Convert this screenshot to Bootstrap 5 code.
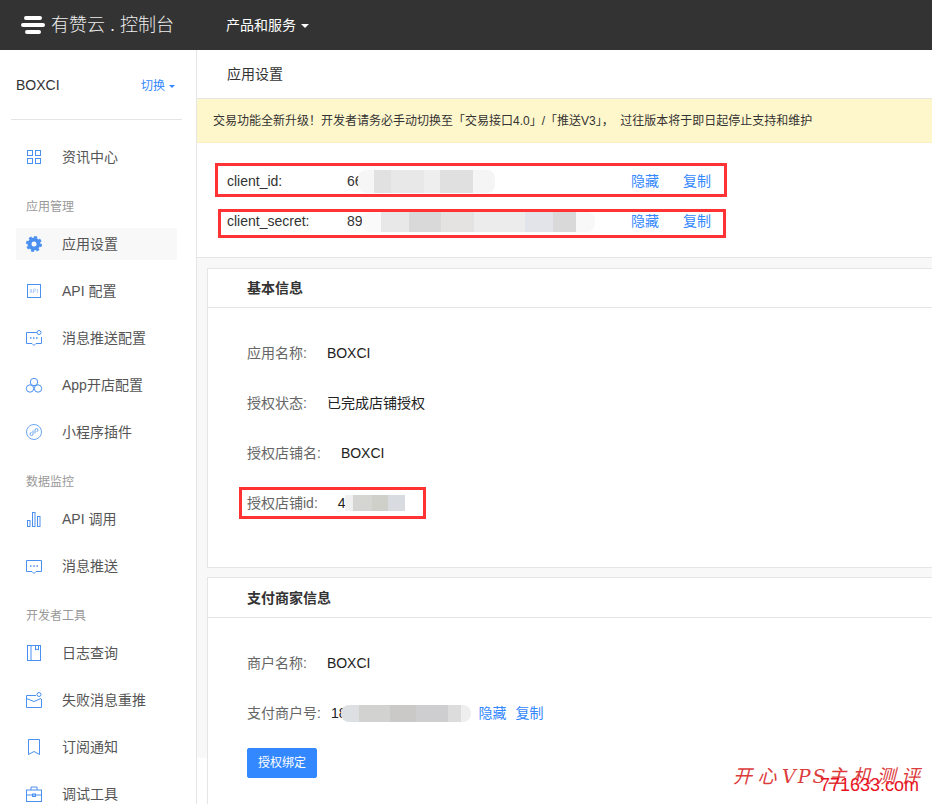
<!DOCTYPE html>
<html lang="zh-CN">
<head>
<meta charset="utf-8">
<title>应用设置</title>
<link href="https://cdn.jsdelivr.net/npm/bootstrap@5.3.0/dist/css/bootstrap.min.css" rel="stylesheet">
<style>
html,body{height:804px;overflow:hidden}
body{position:relative;font-family:"Liberation Sans","Noto Sans CJK SC",sans-serif;font-size:14px;color:#333;background:#fff}
a{text-decoration:none}
.top-bar{height:50px;background:#333;padding:0}
.brand-box{width:197px;padding-left:21px;gap:6px;margin:0;color:#eee;font-size:18px;font-weight:300}
.brand-box svg{flex:none}
.svc-link{color:#fff;padding:0;margin-left:29px;font-size:14px}
.dropdown-toggle::after{margin-left:5px;vertical-align:2px;border-top-width:4px;border-right-width:4px;border-left-width:4px}
.shell{height:754px}
.side-pane{width:197px;flex:none;border-right:1px solid #e5e5e5;padding:0 19px 0 16px;overflow:hidden}
.acct-row{height:69px;padding-top:2px}
.acct-rule{border-bottom:1px solid #e5e5e5;margin:0 -5px 21px;height:1px}
.swap-link{color:#38f;font-size:12px;margin-right:2px}
.swap-link.dropdown-toggle::after{margin-left:4px;vertical-align:2px;border-top-width:3px;border-right-width:3px;border-left-width:3px}
.menu-item{height:32px;margin-bottom:15px;color:#555;padding-left:9px;gap:19px;border-radius:2px}
.menu-item svg{flex:none}
.menu-item.is-on{background:#f8f8f8}
.menu-group{height:18px;line-height:18px;margin:25px 0 12px 10px;font-size:12px;color:#999}
.main-pane{flex:1;min-width:0;overflow:hidden}
.page-title{height:49px;padding-left:30px;border-bottom:1px solid #e5e5e5;color:#333}
.notice-bar{height:44px;margin:0;padding:0 0 0 16px;border:0;border-bottom:1px solid #fbeec2;border-radius:0;background:#fff7cc;color:#333;font-size:12px;white-space:pre}
.keys-pane{height:115px;padding:20px 0 0 18px;border-bottom:1px solid #e5e5e5}
.red-frame{border:3px solid #f33}
.key-one{width:512px;height:34px;margin-bottom:12px;padding:2px 13px 0 9px}
.key-two{width:508px;height:29px;margin-left:3px;padding:0 12px 4px 6px}
.key-name{width:120px;flex:none}
.blue-link{color:#38f}
.gap-links{gap:24px}
.smear{display:inline-block;position:relative;border-radius:8px}
.smear-a{width:137px;height:23px;margin-left:-5px;background:linear-gradient(90deg,#f6f6f6 0 12%,#e2e1e1 12% 24%,#e8e8e8 24% 48%,#eee 48% 60%,#e0e0e0 60% 84%,#f5f5f5 84%)}
.smear-b{width:233px;height:20px;margin-left:-1px;background:linear-gradient(90deg,#fafafa 0 8%,#e8e8e8 8% 20%,#d9d9d9 20% 34%,#e5e2e2 34% 48%,#ececec 48% 70%,#e2e4e9 70% 82%,#d9d9d9 82% 92%,#f8f8f8 92%)}
.smear-c{width:60px;height:16px;margin-left:-1px;border-radius:0;background:linear-gradient(90deg,#f0f0f0 0 14%,#d5d5d2 14% 45%,#d0d0ca 45% 72%,#d8dce0 72%)}
.smear-d{width:130px;height:17px;margin-left:-5px;background:linear-gradient(90deg,#dde0e2 0 14%,#d2d2d0 14% 38%,#cbc9c8 38% 58%,#ceced0 58% 82%,#dcdcdc 82% 92%,#eee 92%)}
.grey-pane{background:#f8f8f8;padding:10px 0 0 10px;height:500px}
.info-card{border:1px solid #e5e5e5;border-radius:0;margin-right:-4px;margin-bottom:9px}
.info-head{height:39px;background:#fff;border-bottom:1px solid #e5e5e5;border-radius:0!important;padding:0 0 0 39px;font-weight:700;color:#333;line-height:38px}
.info-body{padding:20px 0 0 39px}
.card-one{height:300px}
.card-two{height:300px}
.card-two .info-head{height:40px;line-height:41px}
.field-row{height:50px;color:#333}
.field-name{color:#666}
.field-val{color:#222;margin-left:20px}
.field-tight{margin-left:10px}
.id-frame{height:32px;width:187px;margin-left:-8px;padding-left:5px;flex:none}
.link-one{margin-left:7px}
.link-two{margin-left:9px}
.bind-btn{width:70px;height:30px;padding:0;margin-top:10px;font-size:12px;background:#38f;border-color:#38f;border-radius:2px}
.stamp{position:absolute;left:733px;top:762px;font-family:"DejaVu Serif","Noto Sans CJK SC",serif;font-style:italic;font-size:19px;letter-spacing:5.500px;color:#dc3c3c;white-space:nowrap}
.stamp-latin{letter-spacing:2px}
.site-mark{position:absolute;left:820px;top:773px;font-size:18px;line-height:24px;color:#e8131f;white-space:nowrap}
</style>
</head>
<body>
<nav class="navbar top-bar flex-nowrap justify-content-start">
  <div class="navbar-brand d-flex align-items-center brand-box">
    <svg width="24" height="18" viewBox="0 0 24 18"><rect x="3" y="0" width="18" height="4" rx="2" fill="#fff"/><rect x="0" y="7" width="24" height="4" rx="2" fill="#fff"/><rect x="4" y="14" width="16" height="4" rx="2" fill="#fff"/></svg>
    <span>有赞云 . 控制台</span>
  </div>
  <a class="svc-link dropdown-toggle" href="#">产品和服务</a>
</nav>
<div class="d-flex shell">
  <aside class="side-pane">
    <div class="d-flex align-items-center justify-content-between acct-row"><span>BOXCI</span><a class="swap-link dropdown-toggle" href="#">切换</a></div>
    <div class="acct-rule"></div>
    <div class="menu-item d-flex align-items-center"><svg width="18" height="18" viewBox="0 0 18 18" fill="none" stroke="#4a90f0"><rect x="2.500" y="2.500" width="5" height="5"/><rect x="10.500" y="2.500" width="5" height="5"/><rect x="2.500" y="10.500" width="5" height="5"/><rect x="10.500" y="10.500" width="5" height="5"/></svg><span>资讯中心</span></div>
    <div class="menu-group">应用管理</div>
    <div class="menu-item is-on d-flex align-items-center"><svg width="18" height="18" viewBox="0 0 18 18"><circle cx="9" cy="9" r="6.500" fill="#4a90f0"/><circle cx="9" cy="9" r="7" fill="none" stroke="#4a90f0" stroke-width="2" stroke-dasharray="3 2.500"/><circle cx="9" cy="9" r="2.500" fill="#f8f8f8"/></svg><span>应用设置</span></div>
    <div class="menu-item d-flex align-items-center"><svg width="18" height="18" viewBox="0 0 18 18" fill="none"><rect x="2.500" y="2.500" width="13" height="13" stroke="#4a90f0"/><path d="M5 11l1-4 1 4M8.500 11V7h1.300a1 1 0 010 2.200H8.500M12.500 7v4" stroke="#a8c8f5" stroke-width=".8"/></svg><span>API 配置</span></div>
    <div class="menu-item d-flex align-items-center"><svg width="18" height="18" viewBox="0 0 18 18" fill="none" stroke="#4a90f0"><path d="M12 3.500H1.500v11H7l2 2 2-2h5.500V8"/><circle cx="14" cy="3.500" r="2"/><path d="M5 9h1.500M8 9h1.500M11 9h1.500" stroke-width="1.500"/></svg><span>消息推送配置</span></div>
    <div class="menu-item d-flex align-items-center"><svg width="18" height="18" viewBox="0 0 18 18" fill="none" stroke="#4a90f0"><circle cx="9" cy="6" r="3.700"/><circle cx="5" cy="12.500" r="3.700"/><circle cx="13" cy="12.500" r="3.700"/></svg><span>App开店配置</span></div>
    <div class="menu-item d-flex align-items-center"><svg width="18" height="18" viewBox="0 0 18 18" fill="none" stroke="#6aa5f3"><circle cx="9" cy="9" r="7.500"/><path d="M8 7.500v3.500a1.500 1.500 0 11-1.500-1.500M10 10.500V7a1.500 1.500 0 111.500 1.500"/></svg><span>小程序插件</span></div>
    <div class="menu-group">数据监控</div>
    <div class="menu-item d-flex align-items-center"><svg width="18" height="18" viewBox="0 0 18 18" fill="none" stroke="#4a90f0"><rect x="2.500" y="10.500" width="2.500" height="6"/><rect x="7.500" y="2.500" width="2.500" height="14"/><rect x="12.500" y="6.500" width="2.500" height="10"/></svg><span>API 调用</span></div>
    <div class="menu-item d-flex align-items-center"><svg width="18" height="18" viewBox="0 0 18 18" fill="none" stroke="#4a90f0"><path d="M1.500 3.500h15v11H11l-2 2-2-2H1.500z"/><path d="M5 9h1.500M8.300 9h1.500M11.500 9H13" stroke-width="1.500"/></svg><span>消息推送</span></div>
    <div class="menu-group">开发者工具</div>
    <div class="menu-item d-flex align-items-center"><svg width="18" height="18" viewBox="0 0 18 18" fill="none" stroke="#4a90f0"><rect x="2.500" y="1.500" width="13" height="15"/><path d="M6 1.500v15M10.500 1.500V6l1.500-1 1.500 1V1.500"/></svg><span>日志查询</span></div>
    <div class="menu-item d-flex align-items-center"><svg width="18" height="18" viewBox="0 0 18 18" fill="none" stroke="#4a90f0"><path d="M11 4.500H1.500v12h15V8"/><path d="M1.500 7.500l7.500 3 7-3"/><circle cx="14" cy="3.500" r="2"/></svg><span>失败消息重推</span></div>
    <div class="menu-item d-flex align-items-center"><svg width="18" height="18" viewBox="0 0 18 18" fill="none" stroke="#4a90f0"><path d="M3.500 1.500h11v15l-5.500-3-5.500 3z"/></svg><span>订阅通知</span></div>
    <div class="menu-item d-flex align-items-center"><svg width="18" height="18" viewBox="0 0 18 18" fill="none" stroke="#4a90f0"><rect x="1.500" y="5" width="15" height="11.500"/><path d="M6 5V2h6v3M1.500 10h15"/><rect x="7.500" y="9" width="3" height="2.500"/></svg><span>调试工具</span></div>
  </aside>
  <main class="main-pane">
    <div class="page-title d-flex align-items-center">应用设置</div>
    <div class="alert alert-warning notice-bar d-flex align-items-center" role="alert">交易功能全新升级！开发者请务必手动切换至「交易接口4.0」/「推送V3」，  过往版本将于即日起停止支持和维护</div>
    <section class="keys-pane">
      <div class="red-frame key-one d-flex align-items-center">
        <span class="key-name">client_id:</span><span>66</span><span class="smear smear-a"></span>
        <span class="d-flex gap-links ms-auto"><a class="blue-link" href="#">隐藏</a><a class="blue-link" href="#">复制</a></span>
      </div>
      <div class="red-frame key-two d-flex align-items-center">
        <span class="key-name">client_secret:</span><span>89</span><span class="smear smear-b"></span>
        <span class="d-flex gap-links ms-auto"><a class="blue-link" href="#">隐藏</a><a class="blue-link" href="#">复制</a></span>
      </div>
    </section>
    <section class="grey-pane">
      <div class="card info-card card-one">
        <div class="card-header info-head">基本信息</div>
        <div class="info-body">
          <div class="field-row d-flex align-items-center"><span class="field-name">应用名称:</span><span class="field-val">BOXCI</span></div>
          <div class="field-row d-flex align-items-center"><span class="field-name">授权状态:</span><span class="field-val">已完成店铺授权</span></div>
          <div class="field-row d-flex align-items-center"><span class="field-name">授权店铺名:</span><span class="field-val">BOXCI</span></div>
          <div class="field-row d-flex align-items-center"><div class="red-frame id-frame d-flex align-items-center"><span class="field-name">授权店铺id:</span><span class="field-val">4</span><span class="smear smear-c"></span></div></div>
        </div>
      </div>
      <div class="card info-card card-two">
        <div class="card-header info-head">支付商家信息</div>
        <div class="info-body">
          <div class="field-row d-flex align-items-center"><span class="field-name">商户名称:</span><span class="field-val">BOXCI</span></div>
          <div class="field-row d-flex align-items-center"><span class="field-name">支付商户号:</span><span class="field-val field-tight">18</span><span class="smear smear-d"></span><a class="blue-link link-one" href="#">隐藏</a><a class="blue-link link-two" href="#">复制</a></div>
          <button class="btn btn-primary bind-btn" type="button">授权绑定</button>
        </div>
      </div>
    </section>
  </main>
</div>
<div class="stamp">开心<span class="stamp-latin">VPS</span>主机测评</div>
<div class="site-mark">771633.com</div>
<script src="https://cdn.jsdelivr.net/npm/bootstrap@5.3.0/dist/js/bootstrap.bundle.min.js"></script>
</body>
</html>
